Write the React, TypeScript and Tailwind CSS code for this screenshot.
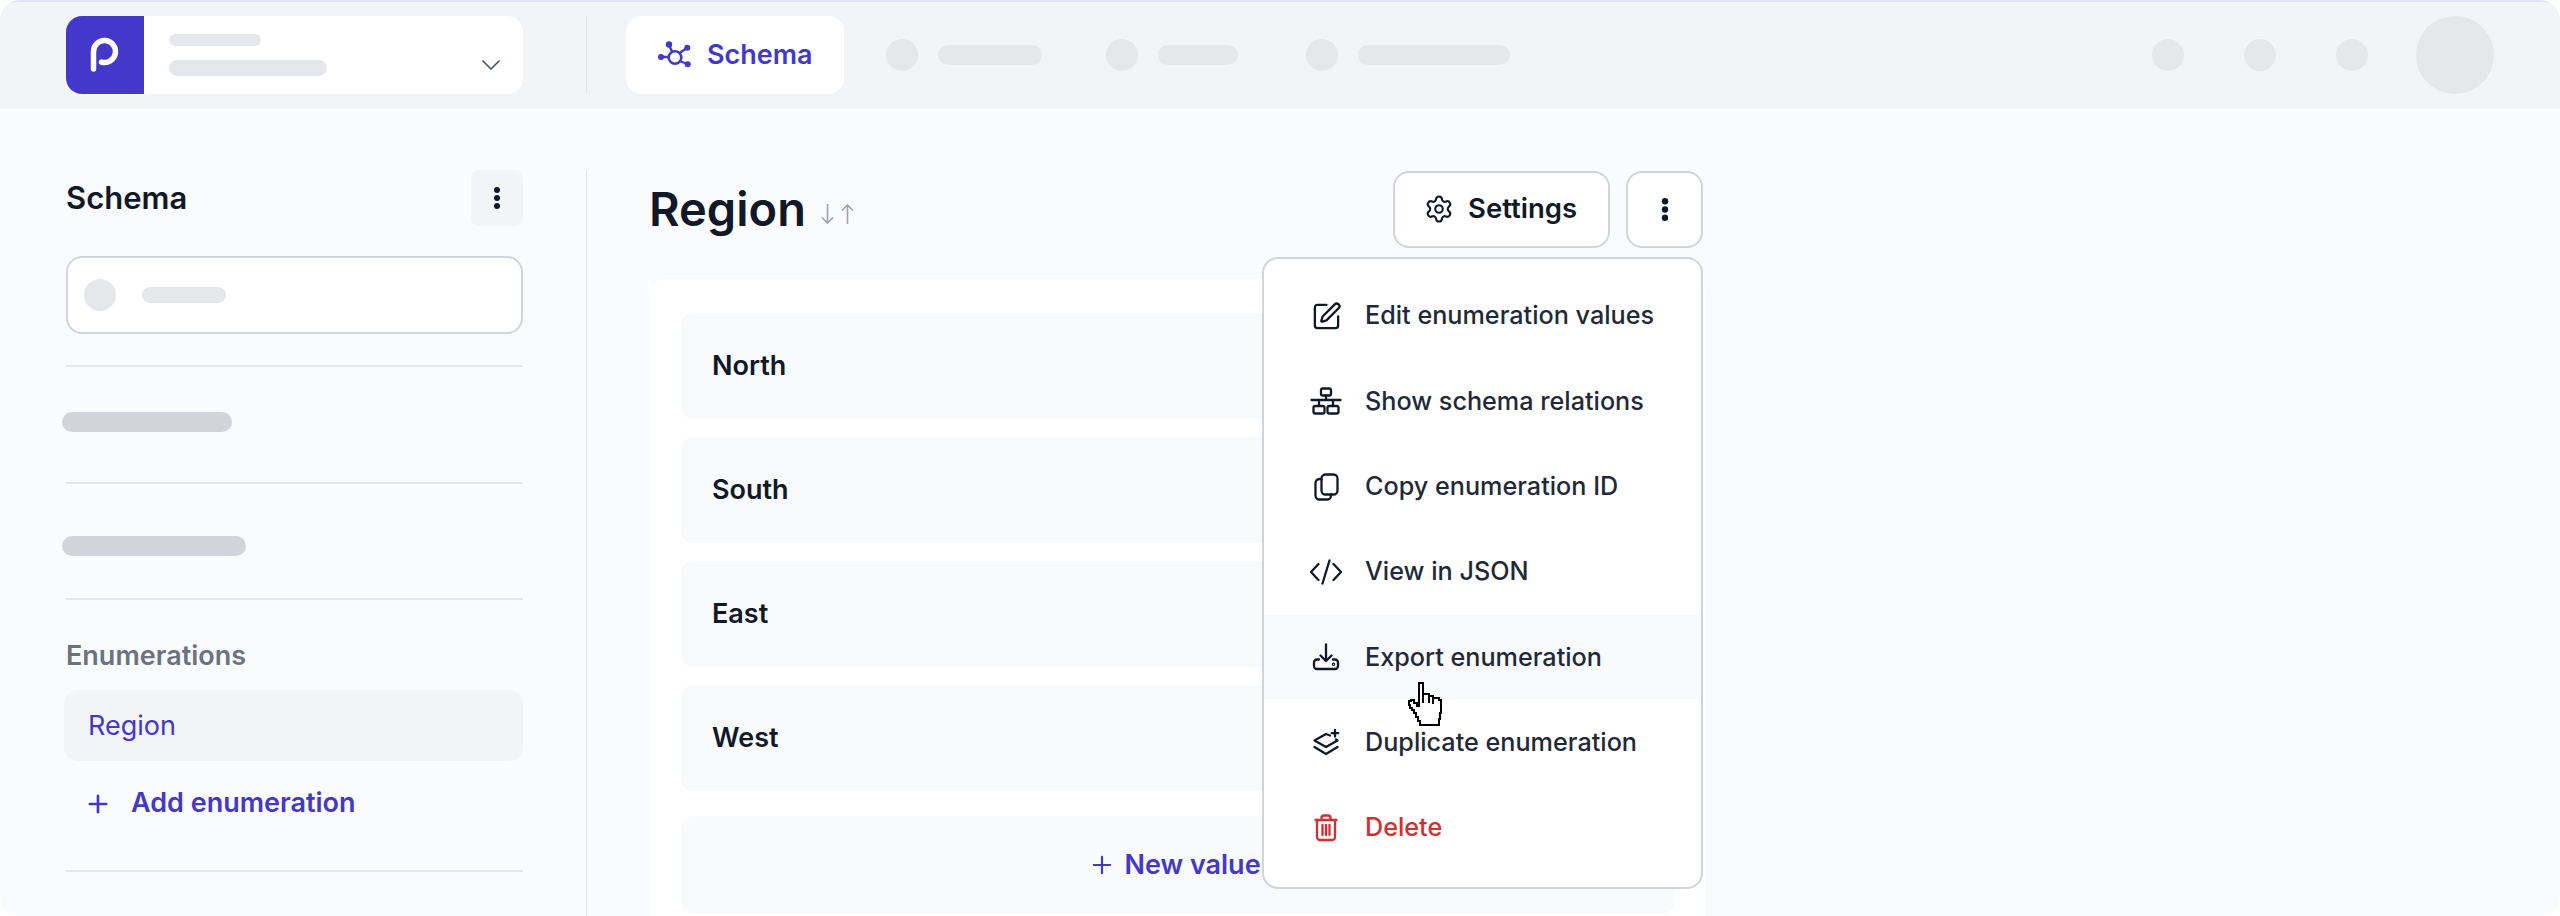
import { ChevronDown, Plus, Settings, SquarePen } from "lucide-react";
import type { ReactNode } from "react";

function Bar({ className }: { className: string }) {
  return <div className={`rounded-full ${className}`} />;
}

function Dots({ w, h, r }: { w: number; h: number; r: number }) {
  return (
    <svg width={w} height={h} viewBox={`0 0 ${w} ${h}`} fill="currentColor">
      <circle cx={w / 2} cy={r} r={r} />
      <circle cx={w / 2} cy={h / 2} r={r} />
      <circle cx={w / 2} cy={h - r} r={r} />
    </svg>
  );
}

function Logo() {
  return (
    <svg width="78" height="78" viewBox="0 0 78 78" fill="none" stroke="white" strokeWidth="5.5" strokeLinecap="round">
      <path d="M27.5 53V35.500a11 11 0 1 1 8 10.600" />
    </svg>
  );
}

function SchemaIcon() {
  return (
    <svg width="35" height="28" viewBox="7 10 35 28" fill="#4338ca" stroke="#4338ca" className="shrink-0">
      <circle cx="25" cy="26.5" r="6.3" fill="none" strokeWidth="2.6" />
      <path d="M19 14l3 6.5M37 17l-7.5 5M11 26h8M37.5 33l-8-3" strokeWidth="2.4" fill="none" />
      <circle cx="19" cy="13.5" r="3.2" stroke="none" />
      <circle cx="37.3" cy="16.7" r="3" stroke="none" />
      <circle cx="11" cy="26" r="3" stroke="none" />
      <circle cx="37.7" cy="33.3" r="3" stroke="none" />
    </svg>
  );
}

function Icon({ children }: { children: ReactNode }) {
  return (
    <svg width="32" height="32" viewBox="0 0 32 32" fill="none" stroke="currentColor" strokeWidth="2.3" strokeLinecap="round" strokeLinejoin="round">
      {children}
    </svg>
  );
}

const menuItems: { label: string; icon: ReactNode; hover?: boolean; danger?: boolean }[] = [
  { label: "Edit enumeration values", icon: <SquarePen size={31} strokeWidth={1.8} /> },
  {
    label: "Show schema relations",
    icon: (
      <Icon>
        <rect x="11" y="3.5" width="10" height="7" rx="1.8" />
        <path d="M16 10.5V15M1.5 15h29M9 15v6M23 15v6" />
        <rect x="3.5" y="21" width="11" height="7.5" rx="1.8" />
        <rect x="17.5" y="21" width="11" height="7.5" rx="1.8" />
      </Icon>
    ),
  },
  {
    label: "Copy enumeration ID",
    icon: (
      <Icon>
        <rect x="11.5" y="3.5" width="16" height="20" rx="4" />
        <path d="M11.5 8H9.500a4 4 0 0 0-4 4v12.500a4 4 0 0 0 4 4H17a4 4 0 0 0 4-4v-1" />
      </Icon>
    ),
  },
  {
    label: "View in JSON",
    icon: (
      <Icon>
        <path d="M8.500 8L1 16l7.500 8M23.500 8L31 16l-7.500 8M19.500 4.500l-7 23" />
      </Icon>
    ),
  },
  {
    label: "Export enumeration",
    hover: true,
    icon: (
      <Icon>
        <path d="M16 3.500V20M10.500 14.500L16 20l5.500-5.500" />
        <path d="M9 18.500H7a3 3 0 0 0-3 3V25a3 3 0 0 0 3 3h18a3 3 0 0 0 3-3v-3.500a3 3 0 0 0-3-3h-2" />
        <circle cx="23.500" cy="23.200" r="0.6" />
      </Icon>
    ),
  },
  {
    label: "Duplicate enumeration",
    icon: (
      <Icon>
        <path d="M20 8.500L16 7 4.500 13.500 16 20l11.500-6.500-1.500-1" />
        <path d="M4.500 20L16 27l11.500-7" />
        <path d="M25 3v6.500M21.800 6.200h6.400" />
      </Icon>
    ),
  },
  {
    label: "Delete",
    danger: true,
    icon: (
      <Icon>
        <path d="M5.500 8h21M11.500 8V6a2.500 2.500 0 0 1 2.500-2.500h4A2.500 2.500 0 0 1 20.500 6v2" />
        <path d="M7 8v17a3 3 0 0 0 3 3h12a3 3 0 0 0 3-3V8" />
        <path d="M12.500 13v10M16 13v10M19.500 13v10" />
      </Icon>
    ),
  },
];

const values = ["North", "South", "East", "West"];

export default function App() {
  return (
    <div className="w-[2560px] h-[916px] bg-white overflow-hidden [font-family:Inter,sans-serif]">
      <div className="relative w-full h-full rounded-[20px] overflow-hidden flex flex-col bg-[#fafbfd]">
        {/* top nav */}
        <div className="h-[109px] shrink-0 bg-[#f3f4f6] border-t-2 border-[#e2e3f6] flex items-center pl-[66px] pr-[66px] pb-[1px]">
          <div className="w-[457px] h-[78px] bg-white rounded-[16px] overflow-hidden flex shrink-0">
            <div className="w-[78px] bg-[#4338ca] shrink-0">
              <Logo />
            </div>
            <div className="ml-[25px] pt-[18px] flex flex-col gap-[14px]">
              <Bar className="w-[92px] h-[12px] bg-[#e5e7eb]" />
              <Bar className="w-[158px] h-[16px] bg-[#e5e7eb]" />
            </div>
            <div className="ml-auto mr-[16px] mt-[33px] text-[#4b5563]">
              <ChevronDown size={32} strokeWidth={1.3} />
            </div>
          </div>
          <div className="ml-[63px] w-px h-[78px] bg-[#e5e7eb] shrink-0" />
          <div className="ml-[39px] w-[218px] h-[78px] bg-white rounded-[16px] flex items-center gap-[15px] pl-[31px] shrink-0">
            <SchemaIcon />
            <span className="text-[27px] font-semibold text-[#4338ca]">Schema</span>
          </div>
          <div className="ml-[42px] flex items-center">
            <div className="w-[32px] h-[32px] rounded-full bg-[#e5e7eb]" />
            <Bar className="ml-[20px] w-[104px] h-[20px] bg-[#e5e7eb]" />
            <div className="ml-[64px] w-[32px] h-[32px] rounded-full bg-[#e5e7eb]" />
            <Bar className="ml-[20px] w-[80px] h-[20px] bg-[#e5e7eb]" />
            <div className="ml-[68px] w-[32px] h-[32px] rounded-full bg-[#e5e7eb]" />
            <Bar className="ml-[20px] w-[152px] h-[20px] bg-[#e5e7eb]" />
          </div>
          <div className="ml-auto flex items-center gap-[60px]">
            <div className="w-[32px] h-[32px] rounded-full bg-[#e5e7eb]" />
            <div className="w-[32px] h-[32px] rounded-full bg-[#e5e7eb]" />
            <div className="w-[32px] h-[32px] rounded-full bg-[#e5e7eb]" />
          </div>
          <div className="ml-[48px] w-[78px] h-[78px] rounded-full bg-[#e5e7eb] shrink-0" />
        </div>

        <div className="flex-1 flex pt-[61px] min-h-0">
          {/* sidebar */}
          <div className="w-[587px] shrink-0 border-r border-[#dfe1e6] pl-[66px] pr-[63px]">
            <div className="h-[56px] flex items-center justify-between">
              <span className="text-[31px] font-semibold text-[#111827]">Schema</span>
              <div className="w-[52px] h-[56px] rounded-[8px] bg-[#f3f4f6] flex items-center justify-center text-[#111827]">
                <Dots w={8} h={22} r={3} />
              </div>
            </div>
            <div className="mt-[30px] h-[78px] bg-white border-2 border-[#d1d5db] rounded-[16px] flex items-center pl-[16px]">
              <div className="w-[32px] h-[32px] rounded-full bg-[#e5e7eb]" />
              <Bar className="ml-[26px] w-[84px] h-[16px] bg-[#e5e7eb]" />
            </div>
            <div className="mt-[31px] h-[2px] bg-[#e5e7eb]" />
            <Bar className="mt-[45px] -ml-[4px] w-[170px] h-[20px] bg-[#d1d5db]" />
            <div className="mt-[50px] h-[2px] bg-[#e5e7eb]" />
            <Bar className="mt-[52px] -ml-[4px] w-[184px] h-[20px] bg-[#d1d5db]" />
            <div className="mt-[42px] h-[2px] bg-[#e5e7eb]" />
            <div className="mt-[40px] h-[32px] flex items-center text-[27px] font-semibold text-[#6b7280]">Enumerations</div>
            <div className="mt-[18px] -ml-[2px] h-[71px] rounded-[14px] bg-[#f3f4f6] flex items-center pl-[24px] pt-[2px] text-[27px] text-[#4338ca]">
              Region
            </div>
            <div className="mt-[20px] h-[44px] flex items-center pl-[18px] pt-[1px] gap-[19px] text-[27px] font-semibold text-[#4338ca]">
              <Plus size={28} strokeWidth={2.3} />
              Add enumeration
            </div>
            <div className="mt-[45px] h-[2px] bg-[#e5e7eb]" />
          </div>

          {/* content */}
          <div className="ml-[63px] w-[1055px] flex flex-col min-h-0">
            <div className="h-[109px] shrink-0 flex items-start">
              <span className="mt-[11px] -ml-[1px] text-[47px] leading-[56px] font-semibold text-[#111827]">Region</span>
              <svg width="33" height="20" viewBox="0 0 33 20" fill="none" stroke="#9ca3af" strokeWidth="1.6" className="ml-[15px] mt-[34px]">
                <path d="M6.500 0v19M1 13.500l5.500 5.500 5.500-5.500M26.500 20V1M21 6.500L26.500 1 32 6.500" />
              </svg>
              <div className="ml-auto mr-[2px] mt-[1px] flex gap-[16px]">
                <div className="w-[217px] h-[77px] bg-white border-2 border-[#d1d5db] rounded-[16px] flex items-center pl-[29px] pb-[2px] gap-[14px] text-[27.500px] font-semibold text-[#111827]">
                  <Settings size={30} strokeWidth={1.7} />
                  Settings
                </div>
                <div className="w-[77px] h-[77px] bg-white border-2 border-[#d1d5db] rounded-[16px] flex items-center justify-center text-[#111827]">
                  <Dots w={8} h={23} r={3.2} />
                </div>
              </div>
            </div>
            <div className="flex-1 bg-white rounded-t-[16px] pt-[34px] px-[31px]">
              <div className="flex flex-col gap-[18px]">
                {values.map((v) => (
                  <div key={v} className="h-[106px] bg-[#f9fafc] rounded-[12px] flex items-center pl-[31px] text-[27px] font-semibold text-[#111827]">
                    {v}
                  </div>
                ))}
              </div>
              <div className="mt-[25px] h-[98px] bg-[#f9fafc] rounded-[12px] flex items-center justify-center gap-[8px] pr-[6px] text-[27px] font-semibold text-[#4338ca]">
                <Plus size={28} strokeWidth={1.9} />
                New value
              </div>
            </div>
          </div>
        </div>

        {/* dropdown menu */}
        <div className="absolute left-[1262px] top-[257px] w-[441px] h-[632px] bg-white border-2 border-[#d1d5db] rounded-[16px] pt-[14.500px] overflow-hidden">
          {menuItems.map((item) => (
            <div
              key={item.label}
              className={`h-[85.33px] flex items-center pl-[46px] gap-[23px] text-[25.200px] font-medium ${
                item.danger ? "text-[#d32f2f]" : "text-[#1f2937]"
              } ${item.hover ? "bg-[#f9fafc]" : ""}`}
            >
              <span className={`w-[32px] flex justify-center ${item.danger ? "text-[#d32f2f]" : "text-[#111827]"}`}>{item.icon}</span>
              {item.label}
            </div>
          ))}
        </div>

        {/* pointer */}
        <svg className="absolute left-[1395px] top-[675px]" width="60" height="60" viewBox="0 0 60 60" fill="white" stroke="black" strokeWidth="2" shapeRendering="crispEdges">
          <path d="M24 8H28V19H34V21H38V23H44V25H46V38H45V44H44V50H25V46H23V42H21V38H19V35H17V33H15V30H14V26H16V25H19V28H22V31H24Z" />
          <path d="M34 21V28M38 23V29M28 19V28" fill="none" />
        </svg>
      </div>
    </div>
  );
}
